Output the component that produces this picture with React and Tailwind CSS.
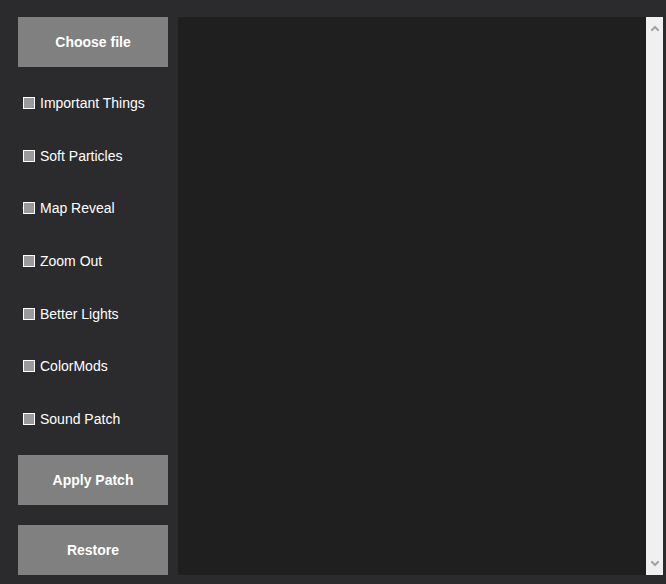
import React from "react";

const items = [
  "Important Things",
  "Soft Particles",
  "Map Reveal",
  "Zoom Out",
  "Better Lights",
  "ColorMods",
  "Sound Patch",
];

function Btn({ children }) {
  return (
    <button className="h-[50px] w-[150px] shrink-0 bg-[#808080] text-white text-[14px] font-bold flex items-center justify-center">
      {children}
    </button>
  );
}

export default function App() {
  return (
    <div
      className="w-[666px] h-[584px] bg-[#2b2b2e] flex pt-[17px] pb-[9px] pr-[3px] overflow-hidden"
      style={{ fontFamily: '"Liberation Sans", Arial, sans-serif' }}
    >
      <div className="w-[178px] shrink-0 pl-[18px] pr-[10px] flex flex-col">
        <Btn>Choose file</Btn>
        <div className="h-[388px] py-[10px] flex flex-col">
          {items.map((t) => (
            <div key={t} className="flex-1 flex items-center pl-[5px]">
              <span className="w-[12px] h-[12px] border border-white bg-[#9a9a9e] mr-[5px] shrink-0" />
              <span className="text-white text-[14px] leading-none">{t}</span>
            </div>
          ))}
        </div>
        <Btn>Apply Patch</Btn>
        <div className="h-[20px] shrink-0" />
        <Btn>Restore</Btn>
      </div>
      <div className="flex-1 bg-[#1f1f1f] flex justify-end">
        <div className="w-[17px] bg-[#f0f0f0] flex flex-col justify-between items-center py-[8px]">
          <svg width="8" height="6" viewBox="0 0 8 6">
            <path d="M0 4.5 L4 0.5 L8 4.5 L8 6 L6.5 6 L4 3.5 L1.5 6 L0 6Z" fill="#a3a3a3" />
          </svg>
          <svg width="8" height="6" viewBox="0 0 8 6">
            <path d="M0 1.5 L4 5.5 L8 1.5 L8 0 L6.5 0 L4 2.5 L1.5 0 L0 0Z" fill="#a3a3a3" />
          </svg>
        </div>
      </div>
    </div>
  );
}
